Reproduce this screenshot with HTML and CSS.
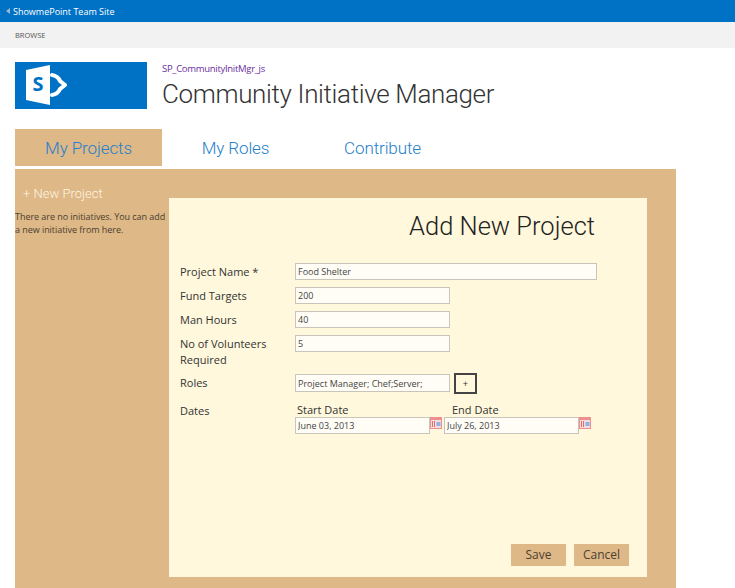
FILE: index.html
```html
<!DOCTYPE html>
<html>
<head>
  <meta charset="UTF-8">
  <title>Community Initiative Manager</title>
  <link rel="stylesheet" href="styles.css">
</head>
<body>
  <div class="topbar"><span class="back"></span>ShowmePoint Team Site</div>
  <div class="ribbon">BROWSE</div>

  <header class="head">
    <div class="logo">
      <svg width="42" height="40" viewBox="0 0 42 40">
        <path d="M0 5 L24 0 V40 L0 35 Z" fill="#fff"/>
        <path d="M26 10 Q32 11 34 16 L39 20 L34 24 Q32 29 26 30" fill="none" stroke="#fff" stroke-width="4" stroke-linejoin="round" stroke-linecap="round"/>
      </svg>
      <span class="logo-s">S</span>
    </div>
    <div>
      <a class="crumb">SP_CommunityInitMgr_js</a>
      <h1>Community Initiative Manager</h1>
    </div>
  </header>

  <nav class="tabs">
    <a class="tab active">My Projects</a>
    <a class="tab">My Roles</a>
    <a class="tab">Contribute</a>
  </nav>

  <main class="panel">
    <div class="side">
      <div class="new-project">+ New Project</div>
      <p>There are no initiatives. You can add a new initiative from here.</p>
    </div>

    <section class="modal">
      <h2>Add New Project</h2>
      <div class="form">
        <label>Project Name *</label>
        <input class="wide" type="text" value="Food Shelter">
        <label>Fund Targets</label>
        <input type="text" value="200">
        <label>Man Hours</label>
        <input type="text" value="40">
        <label class="two-line">No of Volunteers Required</label>
        <input type="text" value="5">
        <label>Roles</label>
        <div class="roles">
          <input type="text" value="Project Manager; Chef;Server;">
          <button class="add" type="button">+</button>
        </div>
        <label>Dates</label>
        <div class="dates">
          <div class="date">
            <span>Start Date</span>
            <div class="date-row">
              <input type="text" value="June 03, 2013">
              <svg class="cal" width="12" height="12" viewBox="0 0 12 12"><rect width="12" height="12" fill="#ee8f8f"/><rect x="1" y="3" width="10" height="8" fill="#f7dcdc"/><path d="M2.5 4v6M4.5 4v6" stroke="#e07070"/><rect x="6.5" y="5" width="4" height="4" fill="#8fb2e6"/></svg>
            </div>
          </div>
          <div class="date end">
            <span>End Date</span>
            <div class="date-row">
              <input type="text" value="July 26, 2013">
              <svg class="cal" width="12" height="12" viewBox="0 0 12 12"><rect width="12" height="12" fill="#ee8f8f"/><rect x="1" y="3" width="10" height="8" fill="#f7dcdc"/><path d="M2.5 4v6M4.5 4v6" stroke="#e07070"/><rect x="6.5" y="5" width="4" height="4" fill="#8fb2e6"/></svg>
            </div>
          </div>
        </div>
      </div>
      <div class="actions">
        <button class="btn" type="button">Save</button>
        <button class="btn" type="button">Cancel</button>
      </div>
    </section>
  </main>
</body>
</html>
```

FILE: styles.css
```css
html, body { height: 100%; }
body { margin: 0; overflow: hidden; background: #fff; font-family: "Open Sans", "Liberation Sans", sans-serif; color: #333; }

.topbar { height: 22px; background: #0072c6; color: #fff; font-size: 9px; line-height: 21px; padding-left: 6px; display: flex; align-items: center; }
.back { width: 0; height: 0; border: 3px solid transparent; border-right: 4px solid #9db7cc; border-left: 0; margin-right: 3px; }
.ribbon { height: 26px; background: #f2f2f2; color: #555; font-size: 7.5px; line-height: 27px; padding-left: 15px; }

.head { display: flex; gap: 15px; padding: 14px 0 0 15px; height: 67px; }
.logo { width: 132px; height: 47px; background: #0072c6; position: relative; }
.logo svg { position: absolute; left: 11px; top: 3px; }
.logo-s { position: absolute; left: 11px; top: 9px; width: 24px; text-align: center; color: #0072c6; font-size: 20px; font-weight: 700; line-height: 26px; }
.crumb { display: block; color: #6b2e9e; font-size: 9.5px; line-height: 13px; letter-spacing: -0.3px; }
h1 { margin: 0; font-family: Roboto, sans-serif; font-size: 26px; font-weight: 300; line-height: 39px; letter-spacing: -0.35px; color: #333; }

.tabs { display: flex; height: 37px; padding-left: 15px; }
.tab { width: 147px; font-family: Roboto, sans-serif; font-size: 17px; font-weight: 300; line-height: 39px; letter-spacing: -0.1px; text-align: center; color: #2480cc; }
.tab.active { background: #deb887; }

.panel { position: relative; margin: 3px 0 0 15px; width: 661px; height: 420px; background: #deb887; }
.side { width: 154px; }
.new-project { padding: 16px 0 0 8px; color: #fff6e2; font-family: Roboto, sans-serif; font-size: 13px; font-weight: 300; line-height: 17px; }
.side p { margin: 9px 0 0; font-size: 9px; line-height: 12.5px; color: #4a4030; letter-spacing: -0.05px; }

.modal { position: absolute; left: 154px; top: 29px; width: 478px; height: 379px; box-sizing: border-box; background: #fff8dc; padding: 0 11px; }
h2 { margin: 0; height: 65px; padding-right: 41px; font-family: Roboto, sans-serif; font-size: 25.5px; font-weight: 300; line-height: 56px; text-align: right; color: #222; }

.form { display: grid; grid-template-columns: 115px 1fr; row-gap: 7px; font-size: 11px; line-height: 16px; color: #333; }
.form label { padding-top: 1px; width: 100px; }
.form label.two-line { box-sizing: border-box; height: 32px; }
input { box-sizing: border-box; width: 155px; height: 17px; padding: 0 2px; border: 1px solid #c8c6bb; background: #fffdf6; font: 9px "Open Sans", sans-serif; color: #444; outline: 0; }
input.wide { width: 302px; }
.roles { display: flex; gap: 4px; height: 21px; }
.roles input { height: 18px; }
.add { width: 23px; height: 21px; margin-top: -1px; padding: 0; background: #fff8dc; border: 2px solid #444; outline: 0; font-size: 9px; line-height: 14px; color: #333; }
.dates { display: flex; gap: 2px; }
.date span { display: block; padding-left: 2px; line-height: 15px; }
.date.end span { padding-left: 8px; }
.date-row { display: flex; align-items: flex-start; }
.date-row input { width: 135px; height: 17px; }

.actions { position: absolute; right: 18px; bottom: 11px; display: flex; gap: 8px; }
.btn { width: 55px; height: 22px; padding: 0 0 2px; border: 0; background: #deb887; color: #4a4030; font: 12px "Open Sans", sans-serif; }
```
